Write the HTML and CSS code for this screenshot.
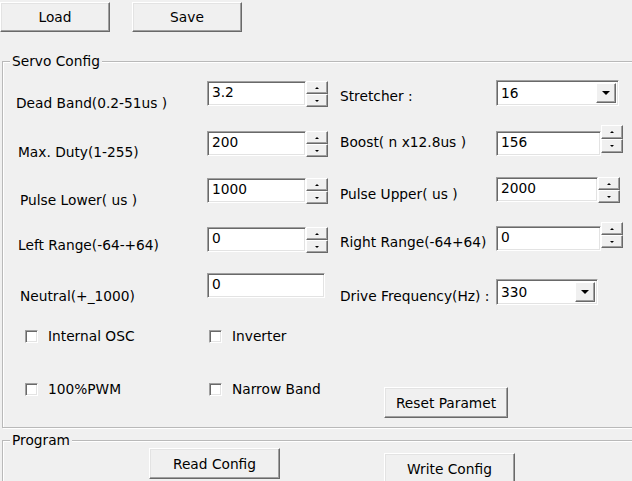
FILE: index.html
```html
<!DOCTYPE html>
<html>
<head>
<meta charset="utf-8">
<link rel="stylesheet" href="styles.css">
</head>
<body>
<div class="toolbar">
  <button class="btn tb-btn">Load</button>
  <button class="btn tb-btn">Save</button>
</div>

<fieldset class="group servo">
  <legend>Servo Config</legend>

  <div class="row r1">
    <div class="lbl ml13 mt15">Dead Band(0.2-51us )</div>
    <div class="spinner mt1"><div class="edit ew-l">3.2</div><div class="spin"><span class="sb"><i class="up"></i></span><span class="sb"><i class="dn"></i></span></div></div>
    <div class="lbl mt8">Stretcher :</div>
    <div class="combo cw-wide"><div class="cval">16</div><span class="drop"><i></i></span></div>
  </div>

  <div class="row r2">
    <div class="lbl ml15 mt19">Max. Duty(1-255)</div>
    <div class="spinner mt6"><div class="edit ew-l">200</div><div class="spin"><span class="sb"><i class="up"></i></span><span class="sb"><i class="dn"></i></span></div></div>
    <div class="lbl mt9">Boost( n x12.8us )</div>
    <div class="spinner mt6"><div class="edit ew-r">156</div><div class="spin raise6"><span class="sb"><i class="up"></i></span><span class="sb"><i class="dn"></i></span></div></div>
  </div>

  <div class="row r3">
    <div class="lbl ml17 mt17">Pulse Lower( us )</div>
    <div class="spinner mt3"><div class="edit ew-l">1000</div><div class="spin"><span class="sb"><i class="up"></i></span><span class="sb"><i class="dn"></i></span></div></div>
    <div class="lbl mt11">Pulse Upper( us )</div>
    <div class="spinner mt2"><div class="edit ew-r2">2000</div><div class="spin"><span class="sb"><i class="up"></i></span><span class="sb"><i class="dn"></i></span></div></div>
  </div>

  <div class="row r4">
    <div class="lbl ml15 mt15">Left Range(-64-+64)</div>
    <div class="spinner mt5"><div class="edit ew-l">0</div><div class="spin"><span class="sb"><i class="up"></i></span><span class="sb"><i class="dn"></i></span></div></div>
    <div class="lbl mt12">Right Range(-64+64)</div>
    <div class="spinner mt4"><div class="edit ew-r">0</div><div class="spin raise4"><span class="sb"><i class="up"></i></span><span class="sb"><i class="dn"></i></span></div></div>
  </div>

  <div class="row r5">
    <div class="lbl ml17 mt15">Neutral(+_1000)</div>
    <div class="edit ew-n">0</div>
    <div class="lbl mt15">Drive Frequency(Hz) :</div>
    <div class="combo cw-narrow mt6"><div class="cval">330</div><span class="drop"><i></i></span></div>
  </div>

  <div class="row r6">
    <label class="check ml22"><span class="box"></span><span>Internal OSC</span></label>
    <label class="check ml2 span2"><span class="box"></span><span>Inverter</span></label>
  </div>

  <div class="row r7">
    <label class="check ml22"><span class="box"></span><span>100%PWM</span></label>
    <label class="check ml2"><span class="box"></span><span>Narrow Band</span></label>
    <button class="btn reset">Reset Paramet</button>
  </div>
</fieldset>

<fieldset class="group program">
  <legend>Program</legend>
  <div class="prog-row">
    <button class="btn read">Read Config</button>
    <button class="btn write">Write Config</button>
  </div>
</fieldset>
</body>
</html>
```

FILE: styles.css
```css
html, body {
  margin: 0;
  padding: 0;
  background: #f0f0f0;
  overflow: hidden;
  width: 632px;
  height: 481px;
}
body {
  font-family: "DejaVu Sans", Tahoma, sans-serif;
  font-size: 13.75px;
  color: #000;
}

/* 3D controls */
.btn {
  font: inherit;
  color: #000;
  background: #f0f0f0;
  border: 1px solid;
  border-color: #fff #696969 #696969 #fff;
  box-shadow: inset -1px -1px #a0a0a0, inset 1px 1px #e3e3e3;
  padding: 0;
  margin: 0;
  box-sizing: border-box;
  display: flex;
  align-items: center;
  justify-content: center;
}
.edit {
  box-sizing: border-box;
  background: #fff;
  border: 1px solid;
  border-color: #a0a0a0 #fff #fff #a0a0a0;
  box-shadow: inset 1px 1px #696969, inset -1px -1px #e3e3e3;
  height: 25px;
  padding: 2px 0 0 4px;
  line-height: 17px;
}

/* toolbar */
.toolbar {
  display: flex;
  gap: 22px;
  padding-top: 2px;
  height: 30px;
}
.tb-btn {
  width: 110px;
  height: 30px;
}

/* group boxes */
.group {
  margin: 0 -30px 0 2px;
  padding: 0;
  border: 1px solid #b9b9b9;
  box-shadow: inset 1px 1px #fff, 1px 1px #fff;
}
.group legend {
  margin-left: 7px;
  padding: 0 2px;
  line-height: 15px;
  height: 15px;
  background: #f0f0f0;
}
.servo {
  margin-top: 22px;
  padding-top: 11px;
}

.row {
  display: grid;
  grid-template-columns: 204px 133px 156px 1fr;
  align-items: start;
}
.r1 { height: 45px; }
.r2 { height: 50px; }
.r3 { height: 47px; }
.r4 { height: 51px; }
.r5 { height: 55px; }
.r6 { height: 53px; }
.r7 { height: 46px; }

.lbl {
  line-height: 16px;
  white-space: nowrap;
}

.ml2 { margin-left: 2px; }
.ml13 { margin-left: 13px; }
.ml15 { margin-left: 15px; }
.ml17 { margin-left: 17px; }
.ml22 { margin-left: 22px; }
.mt1 { margin-top: 1px; }
.mt2 { margin-top: 2px; }
.mt3 { margin-top: 3px; }
.mt4 { margin-top: 4px; }
.mt5 { margin-top: 5px; }
.mt6 { margin-top: 6px; }
.mt8 { margin-top: 8px; }
.mt9 { margin-top: 9px; }
.mt11 { margin-top: 11px; }
.mt12 { margin-top: 12px; }
.mt15 { margin-top: 15px; }
.mt17 { margin-top: 17px; }
.mt19 { margin-top: 19px; }

/* spinner */
.spinner {
  display: flex;
  align-items: flex-start;
}
.ew-l { width: 99px; }
.ew-r { width: 105px; }
.ew-r2 { width: 102px; }
.ew-n { width: 118px; }
.spin {
  display: flex;
  flex-direction: column;
  width: 22px;
  height: 26px;
}
.spin.raise6 { margin-top: -6px; height: 28px; }
.spin.raise4 { margin-top: -4px; }
.sb {
  flex: 1;
  box-sizing: border-box;
  background: #f0f0f0;
  border: 1px solid;
  border-color: #fff #696969 #696969 #fff;
  box-shadow: inset -1px -1px #a0a0a0;
  display: flex;
  align-items: center;
  justify-content: center;
}
.sb i {
  width: 0;
  height: 0;
  border-left: 2px solid transparent;
  border-right: 2px solid transparent;
}
.sb i.up { border-bottom: 2px solid #000; }
.sb i.dn { border-top: 2px solid #000; }

/* combo */
.combo {
  box-sizing: border-box;
  height: 26px;
  background: #fff;
  border: 1px solid;
  border-color: #a0a0a0 #fff #fff #a0a0a0;
  box-shadow: inset 1px 1px #696969, inset -1px -1px #e3e3e3;
  display: flex;
  align-items: stretch;
  padding: 2px;
}
.cw-wide { width: 123px; }
.cw-narrow { width: 102px; }
.cval {
  flex: 1;
  padding-left: 2px;
  line-height: 20px;
}
.drop {
  width: 20px;
  box-sizing: border-box;
  background: #f0f0f0;
  border: 1px solid;
  border-color: #fff #696969 #696969 #fff;
  box-shadow: inset -1px -1px #a0a0a0;
  display: flex;
  align-items: center;
  justify-content: center;
}
.drop i {
  width: 0;
  height: 0;
  border-left: 4px solid transparent;
  border-right: 4px solid transparent;
  border-top: 4px solid #000;
}

/* checkbox */
.check {
  display: flex;
  align-items: center;
  gap: 10px;
  line-height: 16px;
  white-space: nowrap;
}
.box {
  box-sizing: border-box;
  width: 13px;
  height: 13px;
  background: #fff;
  border: 1px solid;
  border-color: #a0a0a0 #fff #fff #a0a0a0;
  box-shadow: inset 1px 1px #696969, inset -1px -1px #e3e3e3;
}
.span2 { grid-column: span 2; }

.reset {
  width: 124px;
  height: 31px;
  margin: 6px 0 0 44px;
}

/* program */
.program {
  margin-top: 5px;
  height: 60px;
}
.prog-row {
  display: flex;
  align-items: flex-start;
}
.read {
  width: 131px;
  height: 31px;
  margin: 0 0 0 146px;
}
.write {
  width: 131px;
  height: 31px;
  margin: 5px 0 0 104px;
}
```
